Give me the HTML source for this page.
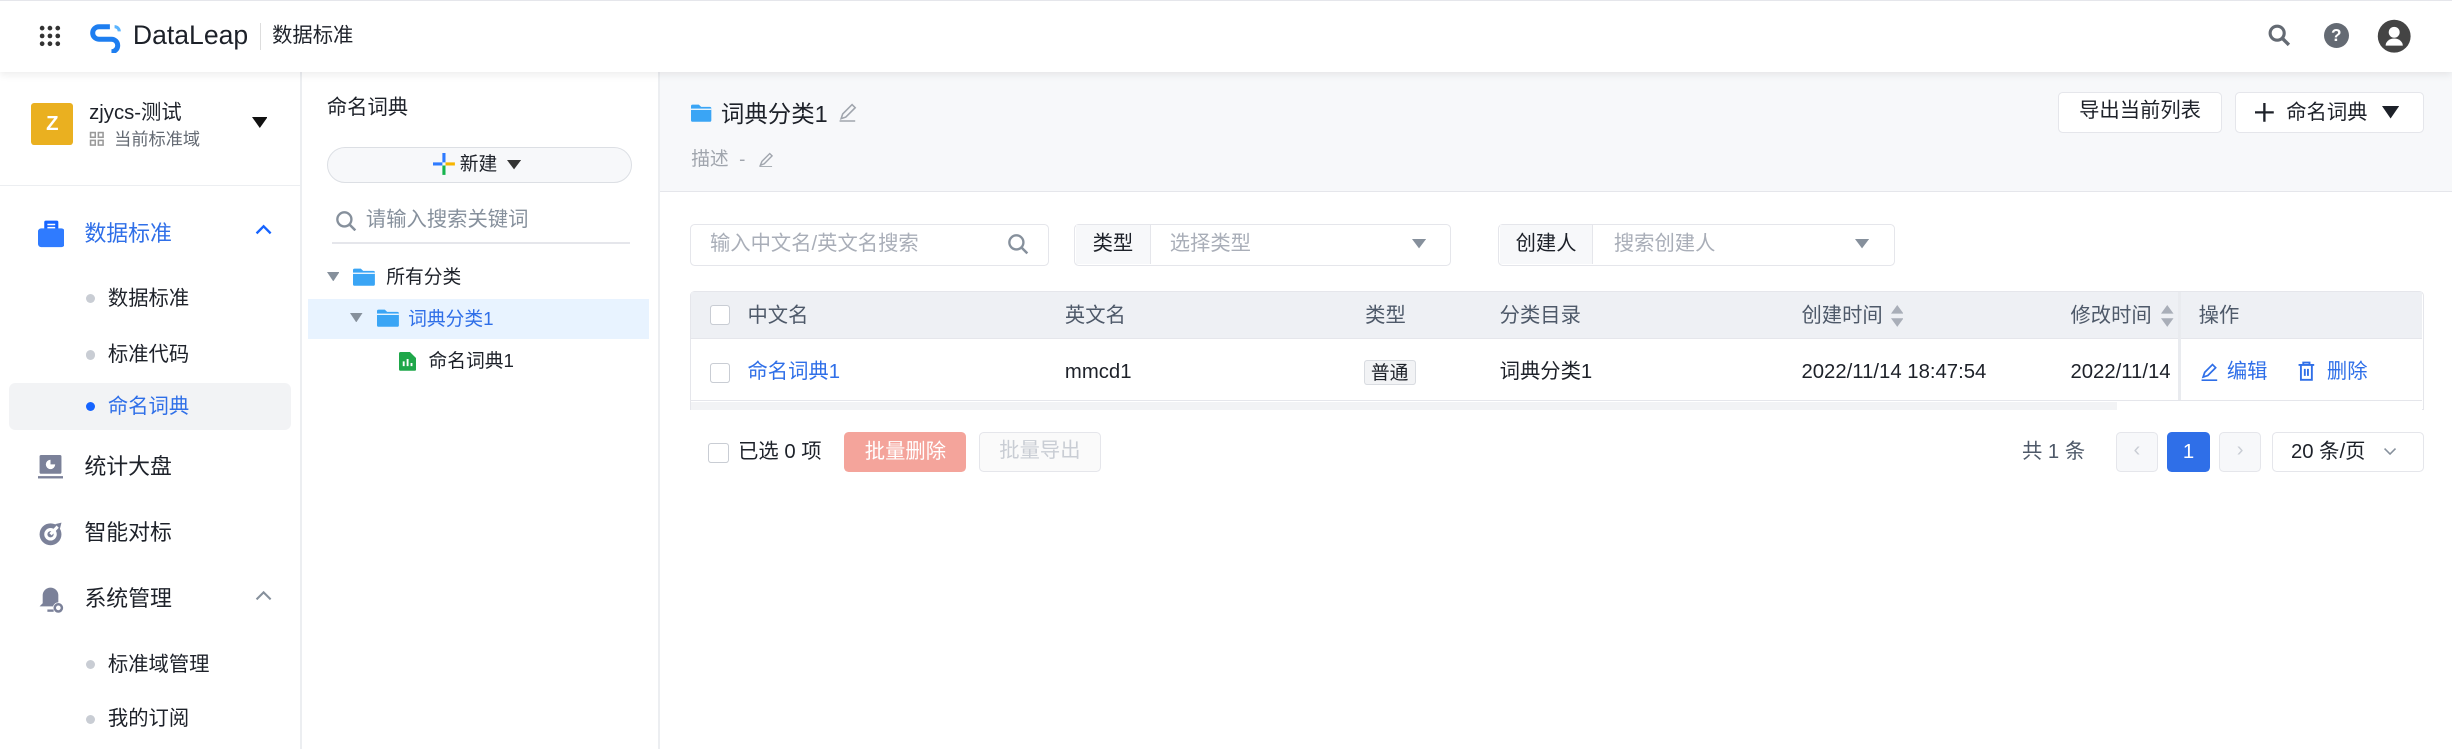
<!DOCTYPE html>
<html><head><meta charset="utf-8"><style>
*{margin:0;padding:0;box-sizing:border-box}
html,body{width:2452px;height:749px;overflow:hidden;background:#fff}
#r{zoom:1.56378;width:1568px;height:479px;position:relative;font-family:"Liberation Sans","Noto Sans CJK SC",sans-serif;color:#1d2129;font-size:13px}
.a{position:absolute;white-space:nowrap;line-height:18px}
.g{color:#86909c}
.b{color:#1664ff}
.dot{position:absolute;width:6px;height:6px;border-radius:50%;background:#c9cdd4}
.box{position:absolute;border:1px solid #e5e6eb;border-radius:3px;background:#fff}
.cb{position:absolute;width:13px;height:13px;border:1px solid #c9cdd4;border-radius:2px;background:#fff}
</style></head><body><div id="r">
<div class="a" style="left:0;top:0;width:1568px;height:46px;background:#fff;border-top:1px solid #e5e6eb;box-shadow:0 2px 5px rgba(0,0,0,.08);z-index:2"></div>
<svg class="a" style="left:25px;top:16px;z-index:3" width="14" height="14"><g fill="#333"><circle cx="2" cy="2" r="1.5"/><circle cx="7" cy="2" r="1.5"/><circle cx="12" cy="2" r="1.5"/><circle cx="2" cy="7" r="1.5"/><circle cx="7" cy="7" r="1.5"/><circle cx="12" cy="7" r="1.5"/><circle cx="2" cy="12" r="1.5"/><circle cx="7" cy="12" r="1.5"/><circle cx="12" cy="12" r="1.5"/></g></svg>
<svg class="a" style="left:56px;top:14px;z-index:3" width="22" height="20" viewBox="0 0 22 20"><path d="M14 3H7a4 4 0 0 0 0 8h8a4 4 0 0 1 0 8" fill="none" stroke="#1e7ef0" stroke-width="3.2"/><path d="M17 3a3 3 0 0 1 3 3" fill="none" stroke="#5ab4ff" stroke-width="2"/></svg>
<div class="a" style="left:85px;top:13px;font-size:17px;line-height:20px;color:#1d2129;z-index:3">DataLeap</div>
<div class="a" style="left:166px;top:15px;width:1px;height:17px;background:#ddd;z-index:3"></div>
<div class="a" style="left:174px;top:14px;font-size:13px;z-index:3">数据标准</div>
<svg class="a" style="left:1450px;top:15px;z-index:3" width="16" height="16"><circle cx="6.5" cy="6.5" r="4.5" fill="none" stroke="#646a73" stroke-width="2"/><path d="M10 10l4 4" stroke="#646a73" stroke-width="2.2"/></svg>
<div class="a" style="left:1486px;top:15px;width:16px;height:16px;border-radius:50%;background:#646a73;color:#fff;font-size:11px;font-weight:bold;text-align:center;line-height:16px;z-index:3">?</div>
<svg class="a" style="left:1520px;top:12px;z-index:3" width="22" height="22"><circle cx="11" cy="11" r="10.5" fill="#444"/><circle cx="11" cy="8.5" r="3.5" fill="#fff"/><path d="M5.5 17a5.5 4.5 0 0 1 11 0z" fill="#fff"/></svg>

<div class="a" style="left:192px;top:46px;width:1px;height:433px;background:#eceef1"></div>
<div class="a" style="left:20px;top:66px;width:27px;height:27px;background:#eab020;border-radius:2px;color:#fff;font-weight:bold;text-align:center;line-height:27px;font-size:13px">Z</div>
<div class="a" style="left:57px;top:63px;font-size:13px">zjycs-测试</div>
<svg class="a" style="left:57px;top:84px" width="10" height="10"><g fill="none" stroke="#999"><rect x="1" y="1" width="3" height="3"/><rect x="6" y="1" width="3" height="3"/><rect x="1" y="6" width="3" height="3"/><rect x="6" y="6" width="3" height="3"/></g></svg>
<div class="a g" style="left:73px;top:80px;font-size:11px;color:#646a73">当前标准域</div>
<svg class="a" style="left:161px;top:75px" width="10" height="8"><path d="M0 0h10L5 7z" fill="#111"/></svg>
<div class="a" style="left:0;top:118px;width:192px;height:1px;background:#eceef1"></div>
<svg class="a" style="left:24px;top:140px" width="17" height="19"><rect x="4" y="1" width="9" height="8" rx="1" fill="#1664ff"/><rect x="0" y="6" width="17" height="12" rx="2" fill="#2f7bff"/><path d="M6 3.5h5M6 5.5h5" stroke="#fff" stroke-width="1"/></svg>
<div class="a b" style="left:54px;top:141px;font-size:14px;color:#2f6fe8">数据标准</div>
<svg class="a" style="left:163px;top:143px" width="11" height="8"><path d="M1 6l4.5-4.5L10 6" fill="none" stroke="#1664ff" stroke-width="1.5"/></svg>
<div class="dot" style="left:55px;top:188px"></div><div class="a" style="left:69px;top:182px">数据标准</div>
<div class="dot" style="left:55px;top:224px"></div><div class="a" style="left:69px;top:218px">标准代码</div>
<div class="a" style="left:6px;top:245px;width:180px;height:30px;background:#f2f3f5;border-radius:4px"></div>
<div class="dot" style="left:55px;top:257px;background:#1664ff"></div><div class="a b" style="left:69px;top:251px;color:#2f6fe8">命名词典</div>
<svg class="a" style="left:24px;top:291px" width="16" height="16"><rect x="1" y="0" width="14" height="12" rx="1" fill="#7b8199"/><path d="M8 3a3 3 0 1 0 3 3H8z" fill="#fff"/><rect x="0" y="13.5" width="16" height="1.5" fill="#7b8199"/></svg>
<div class="a" style="left:54px;top:290px;font-size:14px">统计大盘</div>
<svg class="a" style="left:24px;top:333px" width="16" height="16"><circle cx="8" cy="8.5" r="7" fill="#7b8199"/><circle cx="8" cy="8.5" r="4" fill="#fff"/><circle cx="8" cy="8.5" r="2" fill="#7b8199"/><path d="M8 8.5L15 1" stroke="#fff" stroke-width="2"/><path d="M11 2l4-1-1 4z" fill="#7b8199"/></svg>
<div class="a" style="left:54px;top:332px;font-size:14px">智能对标</div>
<svg class="a" style="left:24px;top:375px" width="17" height="18"><path d="M8 1a5 5 0 0 0-5 5v5l-2 2h14l-2-2V6a5 5 0 0 0-5-5z" fill="#7b8199"/><circle cx="13" cy="14" r="3.5" fill="#fff"/><circle cx="13" cy="14" r="2.3" fill="none" stroke="#7b8199" stroke-width="1.6"/><rect x="6" y="15" width="4" height="1.5" fill="#7b8199"/></svg>
<div class="a" style="left:54px;top:374px;font-size:14px">系统管理</div>
<svg class="a" style="left:163px;top:377px" width="11" height="8"><path d="M1 6l4.5-4.5L10 6" fill="none" stroke="#86909c" stroke-width="1.3"/></svg>
<div class="dot" style="left:55px;top:422px"></div><div class="a" style="left:69px;top:416px">标准域管理</div>
<div class="dot" style="left:55px;top:457px"></div><div class="a" style="left:69px;top:451px">我的订阅</div>

<div class="a" style="left:421px;top:46px;width:1px;height:433px;background:#eceef1"></div>
<div class="a" style="left:209px;top:60px;font-size:13px">命名词典</div>
<div class="a" style="left:209px;top:94px;width:195px;height:23px;border:1px solid #dcdfe4;border-radius:12px;background:#f7f8fa"></div>
<svg class="a" style="left:277px;top:98px" width="14" height="14"><path d="M7 0v6" stroke="#2f7bff" stroke-width="2"/><path d="M7 8v6" stroke="#16b44d" stroke-width="2"/><path d="M0 7h6" stroke="#2f7bff" stroke-width="2"/><path d="M8 7h6" stroke="#f7b500" stroke-width="2"/></svg>
<div class="a" style="left:294px;top:96px;font-size:12px">新建</div>
<svg class="a" style="left:324px;top:102px" width="9" height="7"><path d="M0 0h9L4.5 6z" fill="#333"/></svg>
<svg class="a" style="left:214px;top:134px" width="14" height="14"><circle cx="6" cy="6" r="4.5" fill="none" stroke="#86909c" stroke-width="1.5"/><path d="M9.5 9.5l3.5 3.5" stroke="#86909c" stroke-width="1.6"/></svg>
<div class="a g" style="left:234px;top:132px;font-size:13px">请输入搜索关键词</div>
<div class="a" style="left:212px;top:155px;width:191px;height:1px;background:#e5e6eb"></div>
<svg class="a" style="left:209px;top:174px" width="8" height="6"><path d="M0 0h8L4 6z" fill="#86909c"/></svg>
<svg class="a" style="left:226px;top:171px" width="14" height="12"><path d="M0 2a1 1 0 0 1 1-1h4l1.5 1.5H13a1 1 0 0 1 1 1V11a1 1 0 0 1-1 1H1a1 1 0 0 1-1-1z" fill="#3aa5f5"/><path d="M0 4h14" stroke="#fff" stroke-width=".8"/></svg>
<div class="a" style="left:247px;top:168px;font-size:12px">所有分类</div>
<div class="a" style="left:197px;top:191px;width:218px;height:26px;background:#e8f3ff"></div>
<svg class="a" style="left:224px;top:200px" width="8" height="6"><path d="M0 0h8L4 6z" fill="#86909c"/></svg>
<svg class="a" style="left:241px;top:197px" width="14" height="12"><path d="M0 2a1 1 0 0 1 1-1h4l1.5 1.5H13a1 1 0 0 1 1 1V11a1 1 0 0 1-1 1H1a1 1 0 0 1-1-1z" fill="#3aa5f5"/><path d="M0 4h14" stroke="#fff" stroke-width=".8"/></svg>
<div class="a b" style="left:261px;top:195px;font-size:12px;color:#2f6fe8">词典分类1</div>
<svg class="a" style="left:255px;top:225px" width="11" height="12"><path d="M0 1a1 1 0 0 1 1-1h6l4 4v7a1 1 0 0 1-1 1H1a1 1 0 0 1-1-1z" fill="#1fa74a"/><path d="M3 9V6M5.5 9V4.5M8 9V7" stroke="#fff" stroke-width="1.2"/></svg>
<div class="a" style="left:274px;top:222px;font-size:12px">命名词典1</div>

<div class="a" style="left:422px;top:46px;width:1146px;height:77px;background:#f7f8fa;border-bottom:1px solid #e5e6eb"></div>
<svg class="a" style="left:442px;top:66px" width="13" height="12"><path d="M0 2a1 1 0 0 1 1-1h4l1.5 1.5H12a1 1 0 0 1 1 1V11a1 1 0 0 1-1 1H1a1 1 0 0 1-1-1z" fill="#3aa5f5"/><path d="M0 4h13" stroke="#fff" stroke-width=".8"/></svg>
<div class="a" style="left:461px;top:63px;font-size:15px;line-height:20px">词典分类1</div>
<svg class="a" style="left:536px;top:66px" width="12" height="12"><path d="M2 10l1-3 6-6 2 2-6 6z M1 11.5h10" fill="none" stroke="#a0a5ad" stroke-width="1"/></svg>
<div class="a g" style="left:442px;top:93px;font-size:12px;color:#a0a5ad">描述 &nbsp;-</div>
<svg class="a" style="left:485px;top:97px" width="10" height="10"><path d="M1.5 8.5l1-2.5 5-5 1.5 1.5-5 5z M1 9.5h8" fill="none" stroke="#a0a5ad" stroke-width=".9"/></svg>
<div class="box" style="left:1316px;top:59px;width:105px;height:26px;text-align:center;line-height:24px">导出当前列表</div>
<div class="box" style="left:1429px;top:59px;width:121px;height:26px"></div>
<svg class="a" style="left:1442px;top:66px" width="12" height="12"><path d="M6 0v12M0 6h12" stroke="#1d2129" stroke-width="1.5"/></svg>
<div class="a" style="left:1462px;top:63px">命名词典</div>
<svg class="a" style="left:1523px;top:68px" width="11" height="8"><path d="M0 0h11L5.5 8z" fill="#1d2129"/></svg>

<div class="box" style="left:441px;top:143px;width:230px;height:27px"></div>
<div class="a g" style="left:454px;top:147px;color:#a9aeb8">输入中文名/英文名搜索</div>
<svg class="a" style="left:644px;top:149px" width="14" height="14"><circle cx="6" cy="6" r="4.5" fill="none" stroke="#86909c" stroke-width="1.5"/><path d="M9.5 9.5l3.5 3.5" stroke="#86909c" stroke-width="1.6"/></svg>
<div class="box" style="left:687px;top:143px;width:241px;height:27px"></div>
<div class="a" style="left:688px;top:144px;width:48px;height:25px;background:#f7f8fa;border-right:1px solid #e5e6eb;text-align:center;line-height:25px">类型</div>
<div class="a" style="left:748px;top:147px;color:#a9aeb8">选择类型</div>
<svg class="a" style="left:903px;top:153px" width="9" height="6"><path d="M0 0h9L4.5 6z" fill="#86909c"/></svg>
<div class="box" style="left:958px;top:143px;width:254px;height:27px"></div>
<div class="a" style="left:959px;top:144px;width:60px;height:25px;background:#f7f8fa;border-right:1px solid #e5e6eb;text-align:center;line-height:25px">创建人</div>
<div class="a" style="left:1032px;top:147px;color:#a9aeb8">搜索创建人</div>
<svg class="a" style="left:1186px;top:153px" width="9" height="6"><path d="M0 0h9L4.5 6z" fill="#86909c"/></svg>

<div class="a" style="left:441px;top:186px;width:1109px;height:76px;border:1px solid #e5e6eb;border-radius:3px 3px 0 0"></div>
<div class="a" style="left:442px;top:187px;width:1107px;height:30px;background:#eef0f4;border-bottom:1px solid #e5e6eb"></div>
<div class="a" style="left:1393px;top:187px;width:2px;height:69px;background:#e9ebef"></div>
<div class="a" style="left:442px;top:256px;width:1107px;height:6px;background:#fff;border-top:1px solid #e5e6eb"></div>
<div class="a" style="left:442px;top:257px;width:912px;height:5px;background:#f2f3f5"></div>
<div class="cb" style="left:454px;top:195px"></div>
<div class="a" style="left:478px;top:193px;color:#4e5969">中文名</div>
<div class="a" style="left:681px;top:193px;color:#4e5969">英文名</div>
<div class="a" style="left:873px;top:193px;color:#4e5969">类型</div>
<div class="a" style="left:959px;top:193px;color:#4e5969">分类目录</div>
<div class="a" style="left:1152px;top:193px;color:#4e5969">创建时间</div>
<svg class="a" style="left:1209px;top:195px" width="8" height="14"><path d="M0 5.5L4 0l4 5.5z M0 8.5L4 14l4-5.5z" fill="#a9aeb8"/></svg>
<div class="a" style="left:1324px;top:193px;color:#4e5969">修改时间</div>
<svg class="a" style="left:1382px;top:195px" width="8" height="14"><path d="M0 5.5L4 0l4 5.5z M0 8.5L4 14l4-5.5z" fill="#a9aeb8"/></svg>
<div class="a" style="left:1406px;top:193px;color:#4e5969">操作</div>
<div class="cb" style="left:454px;top:232px"></div>
<div class="a b" style="left:478px;top:229px;color:#2f6fe8">命名词典1</div>
<div class="a" style="left:681px;top:229px">mmcd1</div>
<div class="a" style="left:872px;top:230px;padding:0 4px;border:1px solid #d9dce1;background:#f2f3f5;border-radius:2px;font-size:12px;line-height:15px">普通</div>
<div class="a" style="left:959px;top:229px">词典分类1</div>
<div class="a" style="left:1152px;top:229px">2022/11/14 18:47:54</div>
<div class="a" style="left:1324px;top:229px;width:68px;overflow:hidden">2022/11/14 18:47:54</div>
<svg class="a" style="left:1407px;top:232px" width="12" height="12"><path d="M2 9l1-3 5-5 2 2-5 5z M1 11h10" fill="none" stroke="#2f6fe8" stroke-width="1.1"/></svg>
<div class="a b" style="left:1424px;top:229px;color:#2f6fe8">编辑</div>
<svg class="a" style="left:1469px;top:231px" width="12" height="13"><path d="M1 2.5h10M4 2.5V1h4v1.5M2.5 2.5V12h7V2.5M5 5v4.5M7 5v4.5" fill="none" stroke="#2f6fe8" stroke-width="1.2"/></svg>
<div class="a b" style="left:1488px;top:229px;color:#2f6fe8">删除</div>

<div class="cb" style="left:453px;top:283px"></div>
<div class="a" style="left:472px;top:280px">已选 0 项</div>
<div class="a" style="left:540px;top:276px;width:78px;height:26px;background:#f4a49b;border-radius:3px;color:#fff;text-align:center;line-height:26px">批量删除</div>
<div class="box" style="left:626px;top:276px;width:78px;height:26px;color:#c9cdd4;text-align:center;line-height:24px;background:#fafafa">批量导出</div>
<div class="a" style="left:1293px;top:280px;color:#4e5969">共 1 条</div>
<div class="box" style="left:1353px;top:276px;width:27px;height:26px;background:#f7f8fa;color:#c9cdd4;text-align:center;line-height:23px">‹</div>
<div class="a" style="left:1386px;top:276px;width:27px;height:26px;background:#2f6fe8;border-radius:3px;color:#fff;text-align:center;line-height:26px">1</div>
<div class="box" style="left:1419px;top:276px;width:27px;height:26px;background:#f7f8fa;color:#c9cdd4;text-align:center;line-height:23px">›</div>
<div class="box" style="left:1453px;top:276px;width:97px;height:26px"></div>
<div class="a" style="left:1465px;top:280px">20 条/页</div>
<svg class="a" style="left:1524px;top:286px" width="9" height="6"><path d="M1 1l3.5 3.5L8 1" fill="none" stroke="#86909c" stroke-width="1"/></svg>
</div></body></html>
